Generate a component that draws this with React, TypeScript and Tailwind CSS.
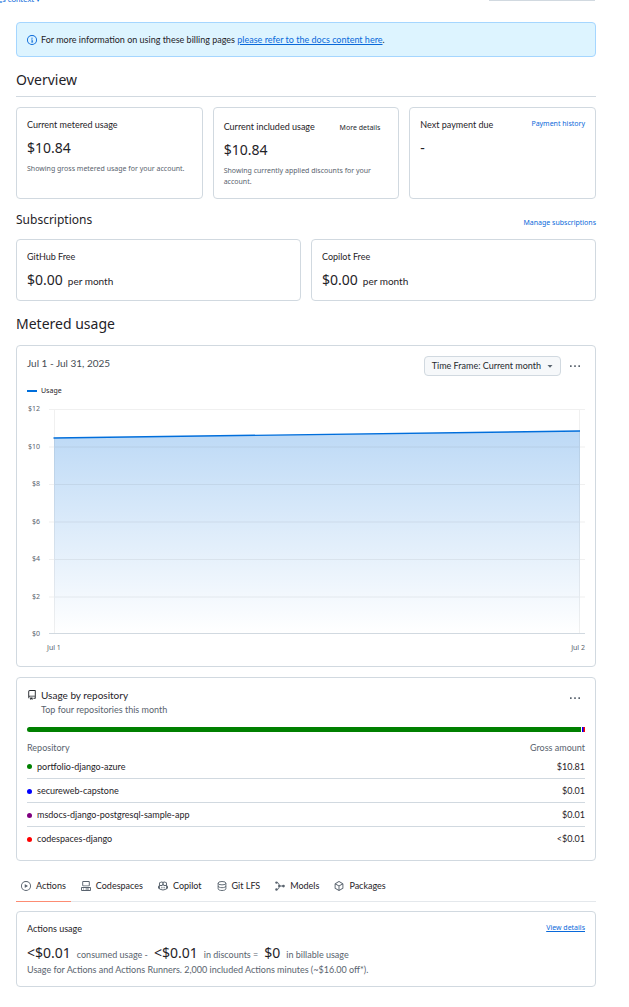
import React from "react";

type IconProps = { className?: string; size?: number; children: React.ReactNode };

function Icon({ className = "", size = 10, children }: IconProps) {
  return (
    <svg
      aria-hidden="true"
      viewBox="0 0 16 16"
      width={size}
      height={size}
      fill="currentColor"
      className={`shrink-0 ${className}`}
    >
      {children}
    </svg>
  );
}

const InfoGlyph = (
  <path d="M0 8a8 8 0 1 1 16 0A8 8 0 0 1 0 8Zm8-6.5a6.5 6.5 0 1 0 0 13 6.5 6.5 0 0 0 0-13ZM6.5 7.75A.75.75 0 0 1 7.25 7h1a.75.75 0 0 1 .75.75v2.75h.25a.75.75 0 0 1 0 1.5h-2a.75.75 0 0 1 0-1.5h.25v-2h-.25a.75.75 0 0 1-.75-.75ZM8 6a1 1 0 1 1 0-2 1 1 0 0 1 0 2Z" />
);
const RepoGlyph = (
  <path d="M2 2.5A2.5 2.5 0 0 1 4.5 0h8.75a.75.75 0 0 1 .75.75v12.5a.75.75 0 0 1-.75.75h-2.5a.75.75 0 0 1 0-1.5h1.75v-2h-8a1 1 0 0 0-.714 1.7.75.75 0 1 1-1.072 1.05A2.495 2.495 0 0 1 2 11.5Zm10.5-1h-8a1 1 0 0 0-1 1v6.708A2.486 2.486 0 0 1 4.5 9h8ZM5 12.25a.25.25 0 0 1 .25-.25h3.5a.25.25 0 0 1 .25.25v3.25a.25.25 0 0 1-.4.2l-1.45-1.087a.249.249 0 0 0-.3 0L5.4 15.7a.25.25 0 0 1-.4-.2Z" />
);
const DotsGlyph = (
  <path d="M0 6.8h2.600v2.600H0Zm6.700 0h2.600v2.600h-2.600Zm6.700 0h2.600v2.600h-2.600Z" />
);
const PlayGlyph = (
  <path d="M8 0a8 8 0 1 1 0 16A8 8 0 0 1 8 0ZM1.5 8a6.5 6.5 0 1 0 13 0 6.5 6.5 0 0 0-13 0Zm4.879-2.773 4.264 2.559a.25.25 0 0 1 0 .428l-4.264 2.559A.25.25 0 0 1 6 10.559V5.442a.25.25 0 0 1 .379-.215Z" />
);
const CodespacesGlyph = (
  <path d="M0 11.25c0-.966.784-1.75 1.75-1.75h12.5c.966 0 1.75.784 1.75 1.75v3A1.75 1.75 0 0 1 14.25 16H1.75A1.75 1.75 0 0 1 0 14.25Zm2-9.5C2 .784 2.784 0 3.75 0h8.5C13.216 0 14 .784 14 1.75v5a1.75 1.75 0 0 1-1.75 1.75h-8.5A1.75 1.75 0 0 1 2 6.75Zm1.75-.25a.25.25 0 0 0-.25.25v5c0 .138.112.25.25.25h8.5a.25.25 0 0 0 .25-.25v-5a.25.25 0 0 0-.25-.25Zm-2 9.5a.25.25 0 0 0-.25.25v3c0 .138.112.25.25.25h12.5a.25.25 0 0 0 .25-.25v-3a.25.25 0 0 0-.25-.25ZM7 12.75a.75.75 0 0 1 .75-.75h4.5a.75.75 0 0 1 0 1.5h-4.5a.75.75 0 0 1-.75-.75Zm-4 0a.75.75 0 0 1 .75-.75h.5a.75.75 0 0 1 0 1.5h-.5a.75.75 0 0 1-.75-.75Z" />
);
const CopilotGlyph = (
  <path d="M7.998 15.035c-4.562 0-7.873-2.914-7.998-3.749V9.338c.085-.628.677-1.686 1.588-2.065.013-.07.024-.143.036-.218.029-.183.06-.384.126-.612-.201-.508-.254-1.084-.254-1.656 0-.87.128-1.769.693-2.484.579-.733 1.494-1.124 2.724-1.261 1.206-.134 2.262.034 2.944.765.05.053.096.108.139.165.044-.057.094-.112.143-.165.682-.731 1.738-.899 2.944-.765 1.23.137 2.145.528 2.724 1.261.566.715.693 1.614.693 2.484 0 .572-.053 1.148-.254 1.656.066.228.098.429.126.612.012.076.024.148.037.218.924.385 1.522 1.471 1.591 2.095v1.872c0 .766-3.351 3.795-8.002 3.795Zm0-1.485c2.28 0 4.584-1.11 5.002-1.433V7.862l-.023-.116c-.49.21-1.075.291-1.727.291-1.146 0-2.059-.327-2.71-.991A3.222 3.222 0 0 1 8 6.303a3.24 3.24 0 0 1-.544.743c-.65.664-1.563.991-2.71.991-.652 0-1.236-.081-1.727-.291l-.023.116v4.255c.419.323 2.722 1.433 5.002 1.433ZM6.762 2.83c-.193-.206-.637-.413-1.682-.297-1.019.113-1.479.404-1.713.7-.247.312-.369.789-.369 1.554 0 .793.129 1.171.308 1.371.162.181.519.379 1.442.379.853 0 1.339-.235 1.638-.54.315-.322.527-.827.617-1.553.117-.935-.037-1.395-.241-1.614Zm4.155-.297c-1.044-.116-1.488.091-1.681.297-.204.219-.359.679-.242 1.614.091.726.303 1.231.618 1.553.299.305.784.54 1.638.54.922 0 1.28-.198 1.442-.379.179-.2.308-.578.308-1.371 0-.765-.123-1.242-.37-1.554-.233-.296-.693-.587-1.713-.7ZM6.25 9.037a.75.75 0 0 1 .75.75v1.501a.75.75 0 0 1-1.5 0V9.787a.75.75 0 0 1 .75-.75Zm4.25.75v1.501a.75.75 0 0 1-1.5 0V9.787a.75.75 0 0 1 1.5 0Z" />
);
const DatabaseGlyph = (
  <g fill="none" stroke="currentColor" strokeWidth="1.5">
    <ellipse cx="8" cy="3.5" rx="6.2" ry="2.7" />
    <path d="M1.8 3.5v9c0 1.5 2.8 2.7 6.2 2.7s6.2-1.2 6.2-2.7v-9M1.8 8c0 1.5 2.8 2.7 6.2 2.7s6.2-1.2 6.2-2.7" />
  </g>
);
const ModelGlyph = (
  <g>
    <path
      d="M2.5 2.5c3.5 0 4 2 4 5.500s-.5 5.500-4 5.500M6.500 8h6"
      fill="none"
      stroke="currentColor"
      strokeWidth="1.5"
    />
    <circle cx="2.300" cy="2.500" r="1.900" />
    <circle cx="2.300" cy="13.500" r="1.900" />
    <circle cx="7" cy="8" r="1.900" />
    <circle cx="13.500" cy="8" r="2.200" />
  </g>
);
const PackageGlyph = (
  <path d="m8.878.392 5.25 3.045c.54.314.872.89.872 1.514v6.098a1.75 1.75 0 0 1-.872 1.514l-5.25 3.045a1.75 1.75 0 0 1-1.756 0l-5.25-3.045A1.75 1.75 0 0 1 1 11.049V4.951c0-.624.332-1.201.872-1.514L7.122.392a1.75 1.75 0 0 1 1.756 0ZM7.875 1.69l-4.63 2.685L8 7.133l4.755-2.758-4.63-2.685a.248.248 0 0 0-.25 0ZM2.5 5.677v5.372c0 .09.047.171.125.216l4.625 2.683V8.432Zm6.25 8.271 4.625-2.683a.25.25 0 0 0 .125-.216V5.677L8.75 8.432Z" />
);

const heading = "font-['Noto_Sans',sans-serif] text-[14px] leading-[22px]";
const figure = "font-['Noto_Sans',sans-serif] text-[14px] leading-[21px]";
const small = "font-['Noto_Sans',sans-serif] text-[7px]";
const label = "font-['Lato','Noto_Sans',sans-serif]";

function Card({ className = "", children }: { className?: string; children: React.ReactNode }) {
  return (
    <section className={`rounded-[4px] border border-[#d1d9e0] bg-white px-[10px] ${className}`}>
      {children}
    </section>
  );
}

function MenuButton({ name }: { name: string }) {
  return (
    <button type="button" aria-label={name} className="flex h-5 w-5 items-center justify-center text-[#59636e]">
      <Icon>{DotsGlyph}</Icon>
    </button>
  );
}

function Subscription({ name }: { name: string }) {
  return (
    <Card className="py-[10px]">
      <h3 className="text-[9px] leading-[14px]">{name}</h3>
      <p className={`mt-[5px] flex items-baseline gap-[5px] ${figure}`}>
        <span>$0.00</span>
        <span className={`text-[10px] leading-none ${label}`}>per month</span>
      </p>
    </Card>
  );
}

function Note({ children }: { children: React.ReactNode }) {
  return <span className={`text-[9px] leading-none text-[#59636e] ${label}`}>{children}</span>;
}

const ticks = ["$12", "$10", "$8", "$6", "$4", "$2", "$0"];

function UsageChart() {
  return (
    <div>
      <div className="flex h-[225px] gap-[9px]">
        <div className={`-my-[6px] flex w-[13px] flex-col justify-between text-right leading-3 text-[#59636e] ${small}`}>
          {ticks.map((t) => (
            <span key={t}>{t}</span>
          ))}
        </div>
        <svg
          role="img"
          aria-label="Usage by day"
          viewBox="0 0 535 225"
          preserveAspectRatio="none"
          className="h-full min-w-0 flex-1"
        >
          <defs>
            <linearGradient id="usage-fill" x1="0" y1="0" x2="0" y2="1">
              <stop offset="0" stopColor="#006edb" stopOpacity="0.26" />
              <stop offset="1" stopColor="#006edb" stopOpacity="0" />
            </linearGradient>
          </defs>
          <path d="M5 29 530 22V224.500H5Z" fill="url(#usage-fill)" />
          <path
            d="M0 .5H535M0 38H535M0 75.500H535M0 113H535M0 150.500H535M0 188H535M5.500 0V224M529.500 0V224"
            stroke="#25292e"
            strokeOpacity="0.070"
          />
          <path d="M0 224.500H535" stroke="#d1d9e0" />
          <path d="M4.500 29 530 22" stroke="#006edb" strokeWidth="1.400" />
        </svg>
      </div>
      <div className={`mt-2 flex justify-between pl-5 leading-3 text-[#59636e] ${small}`}>
        <span>Jul 1</span>
        <span>Jul 2</span>
      </div>
    </div>
  );
}

const repos = [
  { name: "portfolio-django-azure", amount: "$10.81", dot: "bg-[#008000]" },
  { name: "secureweb-capstone", amount: "$0.01", dot: "bg-[#0000ff]" },
  { name: "msdocs-django-postgresql-sample-app", amount: "$0.01", dot: "bg-[#800080]" },
  { name: "codespaces-django", amount: "<$0.01", dot: "bg-[#ff0000]" },
];

const tabs = [
  { name: "Actions", glyph: PlayGlyph },
  { name: "Codespaces", glyph: CodespacesGlyph },
  { name: "Copilot", glyph: CopilotGlyph },
  { name: "Git LFS", glyph: DatabaseGlyph },
  { name: "Models", glyph: ModelGlyph },
  { name: "Packages", glyph: PackageGlyph },
];

export default function App() {
  return (
    <div className={`min-h-screen overflow-hidden bg-white pb-4 text-[#1f2328] ${label}`}>
      <header className="flex h-[22px] items-start justify-between pr-[34px]">
        <div className="flex h-[5px] items-end overflow-hidden">
          <a href="#context" className="-ml-[2px] text-[8px] leading-[11px] text-[#0969da]">
            gs context ▾
          </a>
        </div>
        <div className="h-px w-[106px] bg-[#d1d9e0]" />
      </header>

      <main className="ml-4 mr-[33px]">
        <div className="flex h-[35px] items-center gap-1 rounded-[4px] border border-[#a5d6ff] bg-[#ddf4ff] px-[10px] text-[9px] leading-[14px]">
          <Icon className="text-[#0969da]">{InfoGlyph}</Icon>
          <p>
            For more information on using these billing pages{" "}
            <a href="#docs" className="text-[#0969da] underline">
              please refer to the docs content here
            </a>
            .
          </p>
        </div>

        <h1 className={`mt-3 border-b border-[#d1d9e0] pb-[5px] ${heading}`}>Overview</h1>

        <div className="mt-[10px] grid grid-cols-3 gap-[10px]">
          <Card className="h-[92px] py-[10px]">
            <h2 className="text-[9px] leading-[14px]">Current metered usage</h2>
            <p className={`mt-[5px] ${figure}`}>$10.84</p>
            <p className={`mt-[5px] leading-[11px] text-[#59636e] ${small}`}>
              Showing gross metered usage for your account.
            </p>
          </Card>
          <Card className="h-[92px] py-[10px]">
            <div className="flex h-4 items-end justify-between">
              <h2 className="text-[9px] leading-[14px]">Current included usage</h2>
              <button type="button" className={`mr-2 leading-3 text-[#25292e] ${small}`}>
                More details
              </button>
            </div>
            <p className={`mt-[5px] ${figure}`}>$10.84</p>
            <p className={`mt-[5px] leading-[11px] text-[#59636e] ${small}`}>
              Showing currently applied discounts for your account.
            </p>
          </Card>
          <Card className="h-[92px] py-[10px]">
            <div className="flex items-start justify-between">
              <h2 className="text-[9px] leading-[14px]">Next payment due</h2>
              <a href="#history" className={`leading-[11px] text-[#0969da] ${small}`}>
                Payment history
              </a>
            </div>
            <p className={`mt-[5px] ${figure}`}>-</p>
          </Card>
        </div>

        <div className="mt-[10px] flex h-5 items-end justify-between">
          <h2 className="font-['Noto_Sans',sans-serif] text-[12px] leading-[18px]">Subscriptions</h2>
          <a href="#subscriptions" className={`leading-3 text-[#0969da] ${small}`}>
            Manage subscriptions
          </a>
        </div>
        <div className="mt-[10px] grid grid-cols-2 gap-[10px]">
          <Subscription name="GitHub Free" />
          <Subscription name="Copilot Free" />
        </div>

        <h1 className={`mt-3 ${heading}`}>Metered usage</h1>

        <Card className="mt-[10px] pb-3 pt-[10px]">
          <div className="flex items-start justify-between">
            <h2 className="text-[10px] leading-[14px] text-[#454c54]">Jul 1 - Jul 31, 2025</h2>
            <div className="flex items-center gap-1">
              <button
                type="button"
                className="flex h-5 items-center gap-[6px] rounded-[4px] border border-[#d1d9e0] bg-[#f6f8fa] px-[7px] text-[9px] leading-[14px] text-[#25292e]"
              >
                Time Frame: Current month
                <svg aria-hidden="true" viewBox="1 1 6 6" width="6" height="6" fill="#59636e">
                  <path d="M1.500 3h5L4 5.800Z" />
                </svg>
              </button>
              <MenuButton name="Chart options" />
            </div>
          </div>
          <div className={`mb-3 mt-[9px] flex items-center gap-1 leading-3 ${small}`}>
            <span className="h-[2px] w-[10px] bg-[#006edb]" />
            Usage
          </div>
          <UsageChart />
        </Card>

        <Card className="mt-[10px] pb-[10px] pt-[10px]">
          <div className="flex items-start justify-between">
            <div className="flex gap-1">
              <Icon className="mt-[2px] text-[#25292e]">{RepoGlyph}</Icon>
              <div>
                <h2 className="text-[10px] leading-[15px]">Usage by repository</h2>
                <p className="text-[9px] leading-[14px] text-[#59636e]">Top four repositories this month</p>
              </div>
            </div>
            <MenuButton name="Repository options" />
          </div>
          <div className="mt-[10px] flex h-[5px] gap-px overflow-hidden rounded-l-full">
            <span className="flex-1 bg-[#008000]" />
            <span className="flex">
              <span className="w-px bg-[#0000ff]" />
              <span className="w-px bg-[#800080]" />
              <span className="w-px bg-[#ff0000]" />
            </span>
          </div>
          <table className="mt-[10px] w-full text-[9px]">
            <thead>
              <tr className="h-3 text-[#59636e]">
                <th className="p-0 text-left font-normal leading-3">Repository</th>
                <th className="p-0 text-right font-normal leading-3">Gross amount</th>
              </tr>
            </thead>
            <tbody>
              {repos.map((r) => (
                <tr key={r.name} className="h-6 border-b border-[#d1d9e0] last:border-b-0">
                  <td className="p-0 pt-[2px]">
                    <span className="flex items-center gap-[5px] leading-[14px]">
                      <span className={`h-[5px] w-[5px] rounded-full ${r.dot}`} />
                      {r.name}
                    </span>
                  </td>
                  <td className="p-0 pt-[2px] text-right leading-[14px]">{r.amount}</td>
                </tr>
              ))}
            </tbody>
          </table>
        </Card>

        <nav className="mt-[10px] flex h-[31px] border-b border-[#e4e8ec]">
          {tabs.map((t, i) => (
            <a
              key={t.name}
              href={`#${t.name.toLowerCase().replace(" ", "-")}`}
              aria-current={i === 0 ? "page" : undefined}
              className={`-mb-px mr-[5px] flex items-center gap-[5px] border-b px-[5px] text-[9px] leading-[14px] ${
                i === 0 ? "border-[#fd8c73]" : "border-transparent"
              }`}
            >
              <Icon className="text-[#59636e]">{t.glyph}</Icon>
              {t.name}
            </a>
          ))}
        </nav>

        <Card className="mt-[9px] pb-[9px] pt-[10px]">
          <div className="flex h-[14px] items-start justify-between">
            <h2 className="text-[9px] leading-[14px]">Actions usage</h2>
            <a href="#details" className={`leading-3 text-[#0969da] underline ${small}`}>
              View details
            </a>
          </div>
          <p className={`mt-[6px] flex items-baseline gap-[6px] ${figure}`}>
            <span>&lt;$0.01</span>
            <Note>consumed usage -</Note>
            <span>&lt;$0.01</span>
            <Note>in discounts =</Note>
            <span>$0</span>
            <Note>in billable usage</Note>
          </p>
          <p className="text-[9px] leading-[14px] text-[#59636e]">
            Usage for Actions and Actions Runners. 2,000 included Actions minutes (~$16.00 off*).
          </p>
        </Card>
      </main>
    </div>
  );
}
